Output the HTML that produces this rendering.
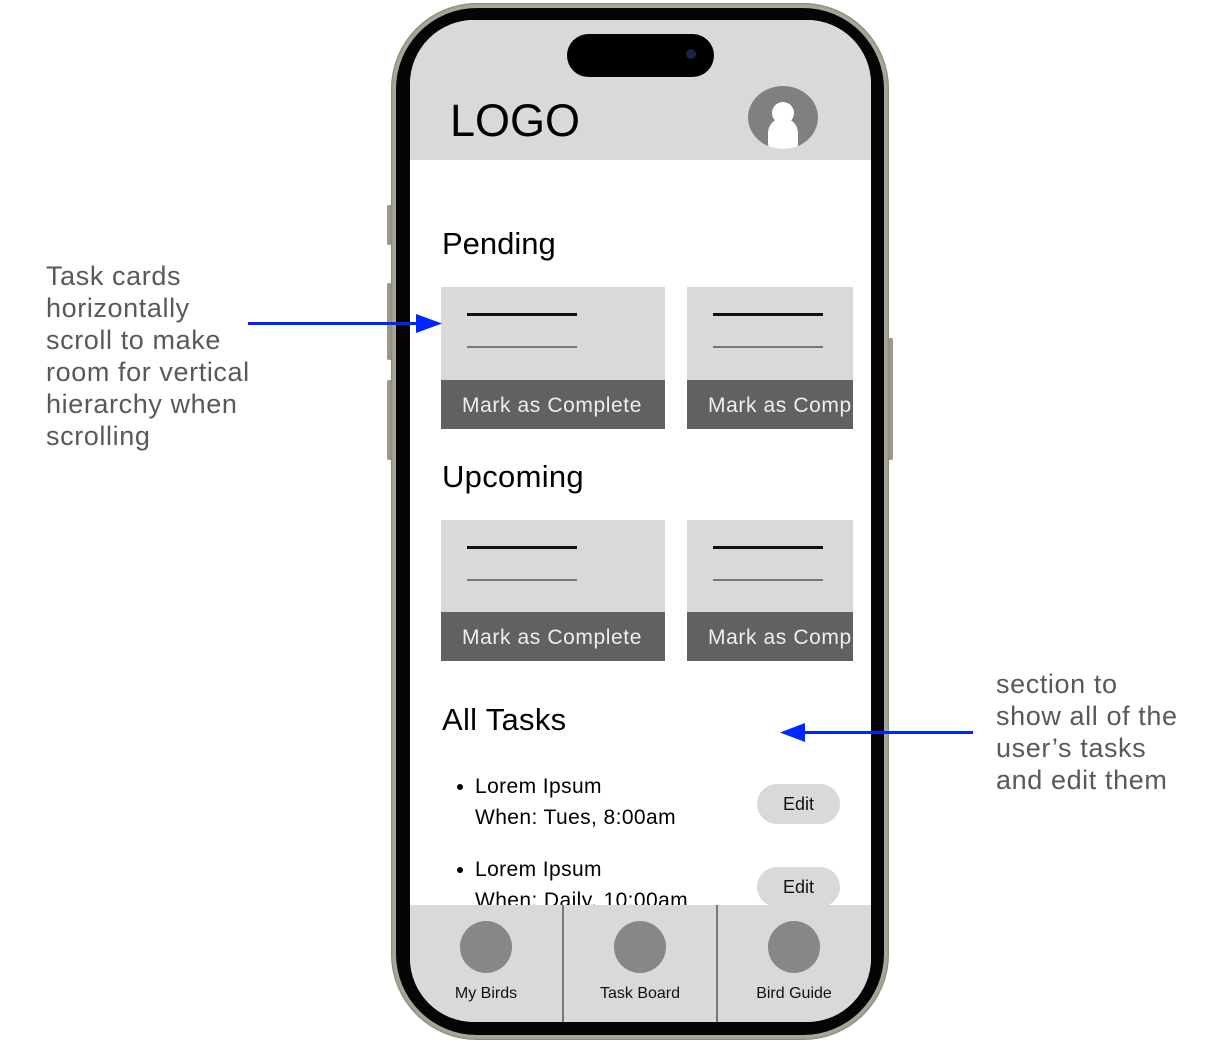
<!DOCTYPE html>
<html><head><meta charset="utf-8"><style>
*{margin:0;padding:0;box-sizing:border-box}
body{width:1210px;height:1043px;background:#fff;position:relative;overflow:hidden;font-family:"Liberation Sans",sans-serif}
.a{position:absolute}
.note{position:absolute;color:#595959;font-size:27px;letter-spacing:0.6px;line-height:32px;white-space:nowrap}
.card{position:absolute;background:#d9d9d9;overflow:hidden}
.card .l1{position:absolute;left:26px;top:26px;width:110px;height:3px;background:#111}
.card .l2{position:absolute;left:26px;top:59px;width:110px;height:2px;background:#777}
.card .b{position:absolute;left:0;right:0;bottom:0;height:49px;background:#616161;color:#eee;font-size:21px;letter-spacing:0.6px;line-height:51px;padding-left:21px;white-space:nowrap}
.t{position:absolute;color:#000;white-space:nowrap}
.edit{position:absolute;width:83px;height:40px;border-radius:20px;background:#d9d9d9;font-size:18px;line-height:40px;text-align:center;color:#111}
.nc{position:absolute;width:52px;height:52px;border-radius:50%;background:#878787}
.nl{position:absolute;font-size:16px;color:#111;width:150px;text-align:center}
</style></head><body>
<div class="note" style="left:46px;top:260px">Task cards<br>horizontally<br>scroll to make<br>room for vertical<br>hierarchy when<br>scrolling</div>
<div class="note" style="left:996px;top:668px">section to<br>show all of the<br>user’s tasks<br>and edit them</div>

<div class="a" style="left:387px;top:205px;width:6px;height:40px;background:#9c9888;border-radius:2px"></div>
<div class="a" style="left:387px;top:283px;width:6px;height:77px;background:#9c9888;border-radius:2px"></div>
<div class="a" style="left:387px;top:380px;width:6px;height:80px;background:#9c9888;border-radius:2px"></div>
<div class="a" style="left:887px;top:338px;width:6px;height:122px;background:#9c9888;border-radius:2px"></div>
<div class="a" style="left:391px;top:3px;width:498px;height:1037px;border-radius:86px;background:#aaa695;box-shadow:inset 0 0 2px #555"></div>
<div class="a" style="left:396px;top:8px;width:488px;height:1027px;border-radius:81px;background:#050505"></div>
<div class="a" style="left:410px;top:20px;width:461px;height:1002px;border-radius:64px;background:#fff;overflow:hidden">
  <div class="a" style="left:0;top:0;width:461px;height:140px;background:#d9d9d9"></div>
  <div class="a" style="left:157px;top:14px;width:147px;height:43px;border-radius:22px;background:#000"></div>
  <div class="a" style="left:276px;top:29px;width:10px;height:10px;border-radius:50%;background:#1a2448"></div>
  <div class="t" style="left:40px;top:76px;font-size:45px;line-height:50px;color:#000">LOGO</div>
  <div class="a" style="left:338px;top:66px;width:70px;height:63px;border-radius:50%;background:#808080;overflow:hidden">
    <div class="a" style="left:24px;top:16px;width:22px;height:22px;border-radius:50%;background:#fff"></div>
    <div class="a" style="left:20px;top:32px;width:30px;height:40px;border-radius:15px;background:#fff"></div>
  </div>
  <div class="t" style="left:32px;top:206px;font-size:31px">Pending</div>
  <div class="card" style="left:31px;top:267px;width:224px;height:142px"><div class="l1"></div><div class="l2"></div><div class="b">Mark as Complete</div></div>
  <div class="card" style="left:277px;top:267px;width:166px;height:142px"><div class="l1"></div><div class="l2"></div><div class="b">Mark as Complete</div></div>
  <div class="t" style="left:32px;top:439px;font-size:31px;letter-spacing:0.3px">Upcoming</div>
  <div class="card" style="left:31px;top:500px;width:224px;height:141px"><div class="l1"></div><div class="l2"></div><div class="b">Mark as Complete</div></div>
  <div class="card" style="left:277px;top:500px;width:166px;height:141px"><div class="l1"></div><div class="l2"></div><div class="b">Mark as Complete</div></div>
  <div class="t" style="left:32px;top:682px;font-size:31px;letter-spacing:0.3px">All Tasks</div>
  <div class="a" style="left:47px;top:764px;width:6px;height:6px;border-radius:50%;background:#000"></div>
  <div class="t" style="left:65px;top:751px;font-size:21px;letter-spacing:0.4px;line-height:31px">Lorem Ipsum<br>When: Tues, 8:00am</div>
  <div class="edit" style="left:347px;top:764px">Edit</div>
  <div class="a" style="left:47px;top:847px;width:6px;height:6px;border-radius:50%;background:#000"></div>
  <div class="t" style="left:65px;top:834px;font-size:21px;letter-spacing:0.4px;line-height:31px">Lorem Ipsum<br>When: Daily, 10:00am</div>
  <div class="edit" style="left:347px;top:847px">Edit</div>
  <div class="a" style="left:0;top:885px;width:461px;height:117px;background:#d9d9d9"></div>
  <div class="a" style="left:152px;top:885px;width:2px;height:117px;background:#777"></div>
  <div class="a" style="left:306px;top:885px;width:2px;height:117px;background:#777"></div>
  <div class="nc" style="left:50px;top:901px"></div>
  <div class="nc" style="left:204px;top:901px"></div>
  <div class="nc" style="left:358px;top:901px"></div>
  <div class="nl" style="left:1px;top:965px">My Birds</div>
  <div class="nl" style="left:155px;top:965px">Task Board</div>
  <div class="nl" style="left:309px;top:965px">Bird Guide</div>
</div>

<svg class="a" style="left:0;top:0" width="1210" height="1043">
  <line x1="248" y1="323.5" x2="420" y2="323.5" stroke="#0026ff" stroke-width="3"/>
  <polygon points="442,323.5 416,314 416,333" fill="#0026ff"/>
  <line x1="973" y1="732.5" x2="800" y2="732.5" stroke="#0026ff" stroke-width="3"/>
  <polygon points="780,732.5 805,723 805,742" fill="#0026ff"/>
</svg>
</body></html>
